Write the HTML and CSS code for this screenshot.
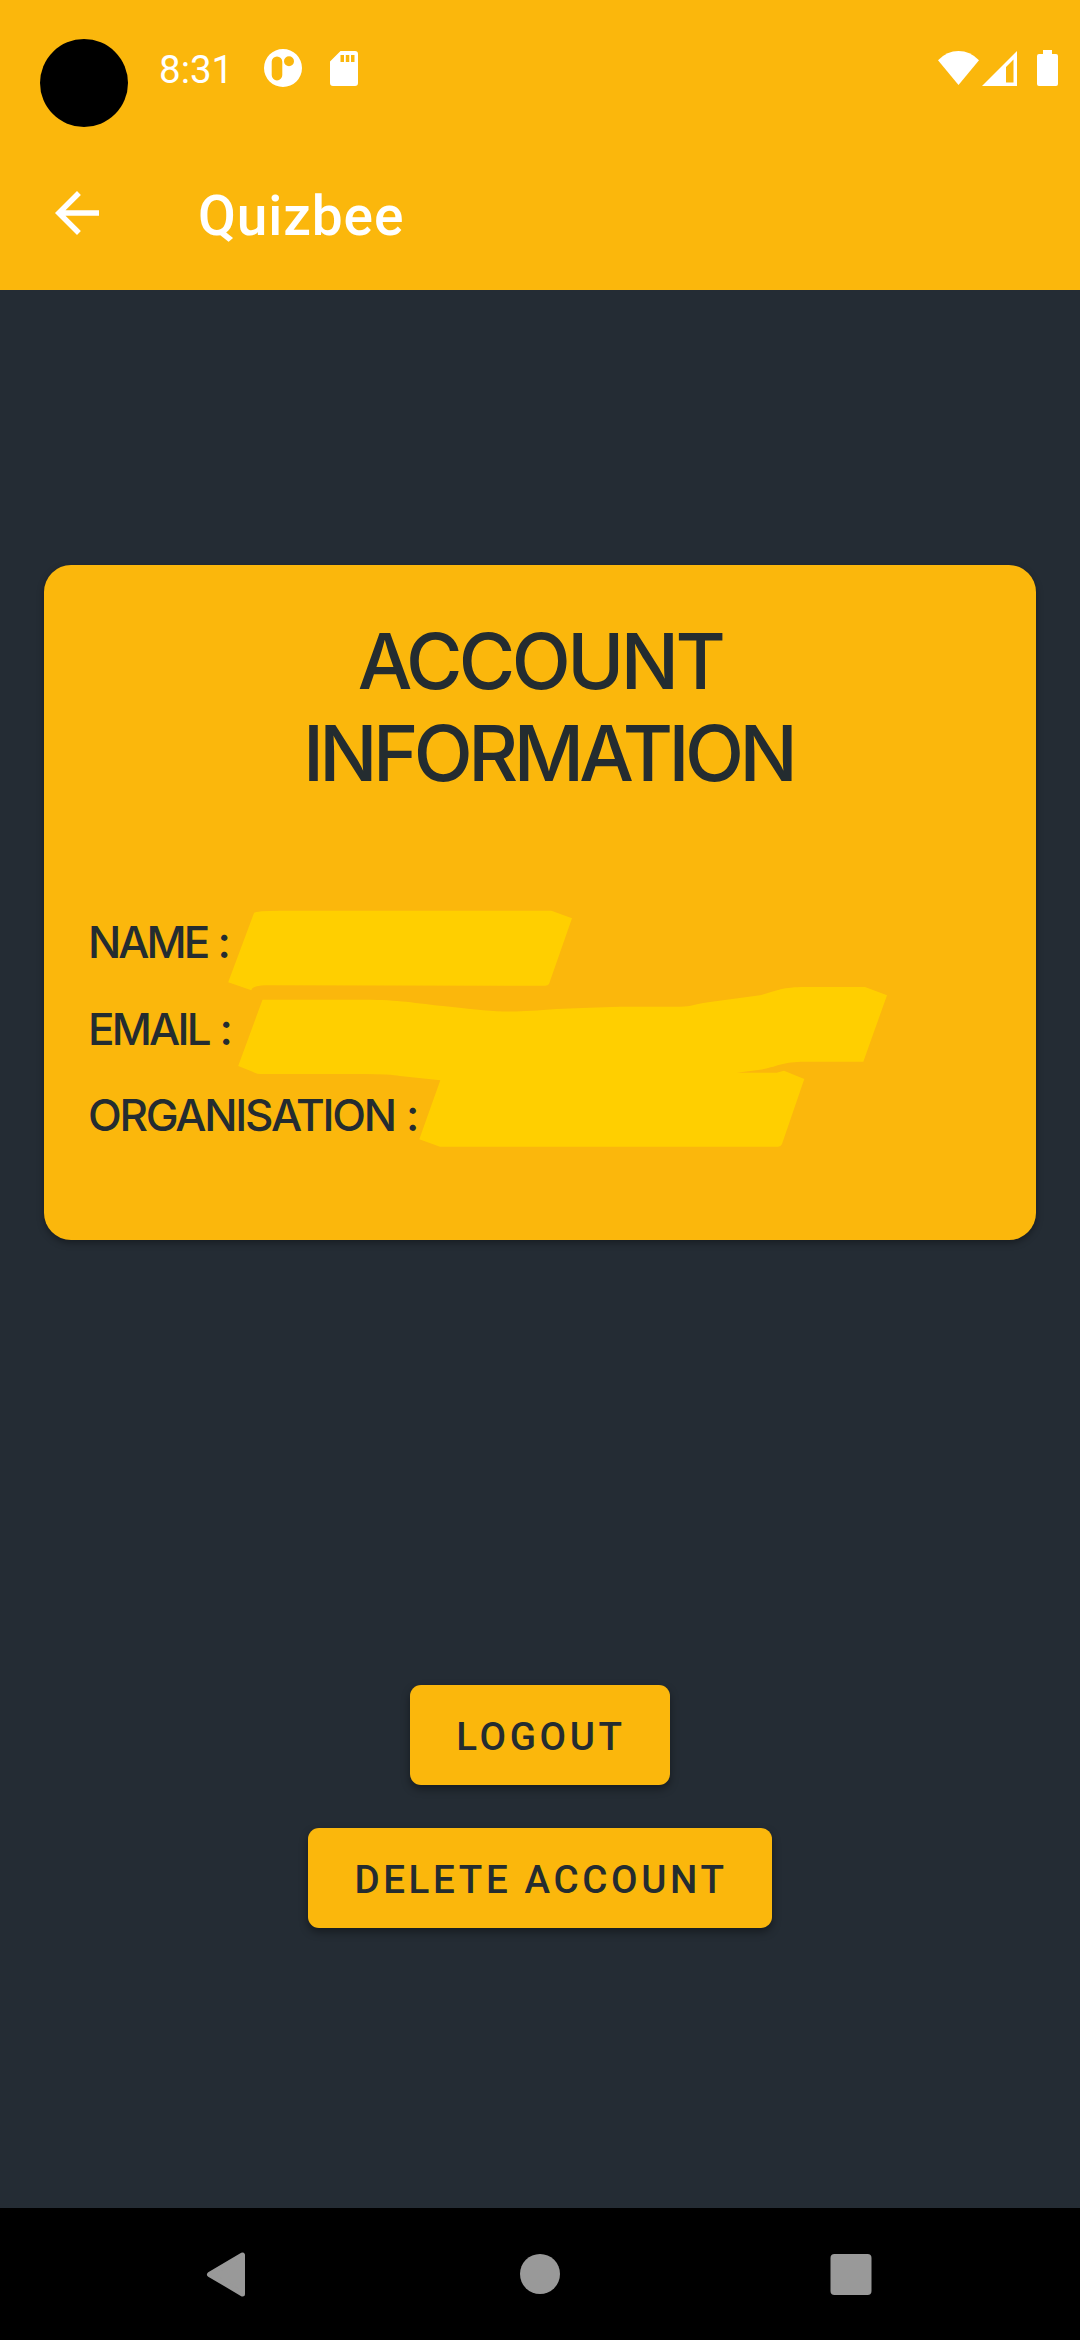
FILE: index.html
```html
<!DOCTYPE html>
<html lang="en">
<head>
<meta charset="utf-8">
<title>Quizbee</title>
<link rel="stylesheet" href="styles.css">
</head>
<body>
<div class="screen">
  <header class="header">
    <div class="status-bar">
      <span class="camera"></span>
      <span class="clock">8:31</span>
      <svg class="icon-app" viewBox="0 0 38 38"><path fill="#fff" fill-rule="evenodd" d="M19 0a19 19 0 1 0 0 38a19 19 0 1 0 0-38zM13 7.500a5.300 5.300 0 0 1 5.300 5.300v13.300a5.300 5.300 0 0 1-10.600 0V12.800a5.300 5.300 0 0 1 5.300-5.300zM25 7.200a5 5 0 1 1 0 10a5 5 0 1 1 0-10z"/></svg>
      <svg class="icon-sd" viewBox="0 0 28 35"><path fill="#fff" fill-rule="evenodd" d="M10.500 0H25a3 3 0 0 1 3 3V32a3 3 0 0 1-3 3H3a3 3 0 0 1-3-3V10.500zM10.500 4v7h3.500V4zM15.800 4v7h3.500V4zM21 4v7h3.500V4z"/></svg>
      <span class="spacer"></span>
      <svg class="icon-wifi" viewBox="0 0 41 34"><path fill="#fff" d="M0 9.200Q9 0 20.500 0T41 9.200L20.500 34z"/></svg>
      <svg class="icon-signal" viewBox="0 0 35 35"><path fill="#fff" fill-rule="evenodd" d="M35 0V35H0zM31.500 8.500L24 16V31.500H31.500z"/></svg>
      <svg class="icon-battery" viewBox="0 0 21 36"><path fill="#fff" d="M6 0h9v4h4a2 2 0 0 1 2 2v28a2 2 0 0 1-2 2H2a2 2 0 0 1-2-2V6a2 2 0 0 1 2-2h4z"/></svg>
    </div>
    <div class="app-bar">
      <svg class="icon-back" viewBox="0 0 24 24"><path fill="#fff" d="M20 11H7.830l5.590-5.590L12 4l-8 8 8 8 1.410-1.410L7.830 13H20v-2z"/></svg>
      <h1 class="app-title">Quizbee</h1>
    </div>
  </header>
  <main class="content">
    <section class="card">
      <h2 class="card-title">ACCOUNT<br><span class="tight">&nbsp;INFORMATION</span></h2>
      <div class="fields">
        <p class="field name">NAME :</p>
        <p class="field email">EMAIL :</p>
        <p class="field organisation">ORGANISATION :</p>
      </div>
      <svg class="marker" viewBox="44 565 992 675">
        <path d="M254 913Q256 910.700 280 910.700H551.400L572 918.300L549 984Q548 985.700 545 985.700L265 985.300Q252 986 251.400 990.300L228.200 982.300z"/>
        <path d="M262.500 999.700H365C400 999.700 412 1003 450 1006.700C495 1012 510 1013 556.700 1009Q590 1007.500 620 1006.700H680C692 1006.700 695 1004 710 1002L760 995.300C776 991 782 987 805 987H865L887 995.300L863.300 1061.700H805C782 1061.700 780 1066 760 1069.700L736.700 1072.700H776.700L784 1070.700L804.300 1079L782 1144Q781 1146.700 778 1146.700H440L419.300 1139.300L440.300 1080.300L400 1076Q390 1074 365 1074H260.400Q257 1074 252 1071.500L238.200 1066z"/>
      </svg>
    </section>
    <div class="actions">
      <button class="btn">LOGOUT</button>
      <button class="btn">DELETE ACCOUNT</button>
    </div>
  </main>
  <nav class="nav-bar">
    <svg class="nav-icon" viewBox="0 0 48 48"><path fill="#999" stroke="#999" stroke-width="5" stroke-linejoin="round" d="M37.500 5V44L4.500 24.500z"/></svg>
    <svg class="nav-icon" viewBox="0 0 48 48"><circle cx="24" cy="24" r="20" fill="#999"/></svg>
    <svg class="nav-icon" viewBox="0 0 48 48"><rect x="3.500" y="4" width="41" height="41" rx="4" fill="#999"/></svg>
  </nav>
</div>
</body>
</html>
```
FILE: styles.css
```css
* { box-sizing: border-box; margin: 0; padding: 0; }
body { background: #242c34; font-family: Roboto, "Liberation Sans", sans-serif; }
svg { display: block; flex: none; }
.screen { width: 1080px; height: 2340px; display: flex; flex-direction: column; background: #242c34; overflow: hidden; }

.header { height: 290px; background: #fbb70c; color: #fff; }
.status-bar { height: 136px; padding: 0 22px 0 40px; display: flex; align-items: center; }
.camera { width: 88px; height: 88px; margin-top: 30px; border-radius: 50%; background: #000; }
.clock { margin-left: 31px; width: 76px; margin-top: 4px; font-size: 38.5px; line-height: 46px; white-space: nowrap; }
.icon-app { width: 38px; height: 38px; margin-left: 29px; }
.icon-sd { width: 28px; height: 35px; margin-left: 28px; }
.spacer { flex: 1; }
.icon-wifi { width: 41px; height: 34px; margin-top: -1px; }
.icon-signal { width: 35px; height: 35px; margin-left: 3px; }
.icon-battery { width: 21px; height: 36px; margin-left: 20px; }
.app-bar { height: 154px; padding-left: 44px; display: flex; align-items: center; }
.icon-back { width: 66px; height: 66px; }
.app-title { margin: 6px 0 0 88px; font-size: 55px; font-weight: 500; letter-spacing: 0.9px; line-height: 64px; }

.content { flex: 1; padding-top: 275px; display: flex; flex-direction: column; align-items: center; }
.card { position: relative; width: 992px; height: 675px; padding: 50px 44px 0; border-radius: 27px; background: #fbb70c; color: #242c30; font-family: Inter, "Liberation Sans", sans-serif; box-shadow: 0 3px 7px rgba(0, 0, 0, 0.35); }
.card-title { text-align: center; font-size: 77px; font-weight: 500; line-height: 92px; letter-spacing: -3.500px; }
.tight { letter-spacing: -4.550px; }
.fields { margin-top: 117px; display: flex; flex-direction: column; gap: 33.500px; }
.field { font-size: 44px; font-weight: 500; line-height: 53px; word-spacing: 1.7px; }
.name { letter-spacing: -3px; }
.email { letter-spacing: -2.8px; }
.organisation { letter-spacing: -2.25px; }
.marker { position: absolute; inset: 0; width: 992px; height: 675px; fill: #ffcf00; }

.actions { margin-top: 445px; display: flex; flex-direction: column; align-items: center; gap: 43px; }
.btn { height: 100px; padding: 3px 44px 0 46px; border: 0; border-radius: 11px; background: #fbb70c; color: #242c30; font: 500 38.5px/46px Roboto, "Liberation Sans", sans-serif; letter-spacing: 3.65px; box-shadow: 0 4px 8px rgba(0, 0, 0, 0.4); }

.nav-bar { height: 132px; padding: 0 205px; display: flex; align-items: center; justify-content: space-between; background: #000; }
.nav-icon { width: 48px; height: 48px; }
```
